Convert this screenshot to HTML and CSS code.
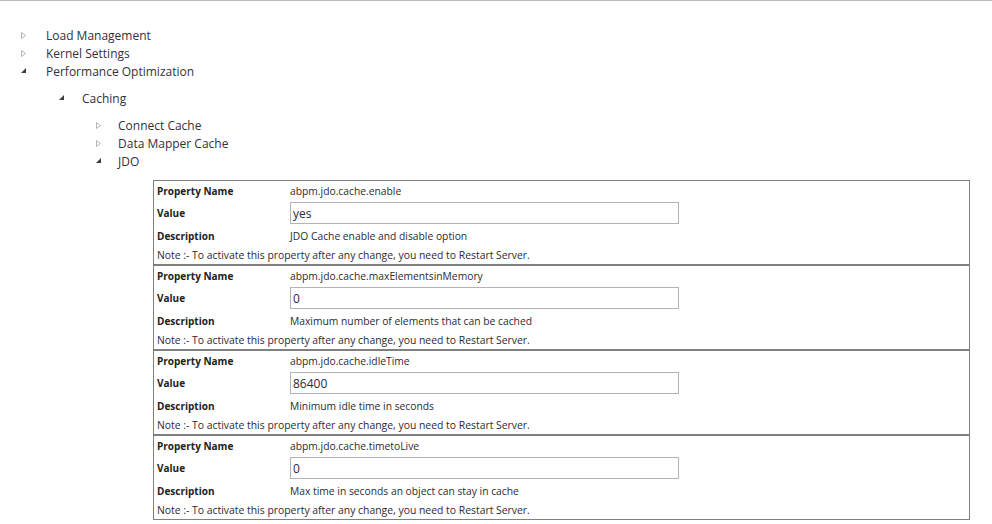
FILE: index.html
```html
<!DOCTYPE html>
<html>
<head>
<meta charset="utf-8">
<link rel="stylesheet" href="styles.css">
</head>
<body>
<div class="frame">
  <ul class="tree lvl1">
    <li><div class="item"><span class="tog"><svg class="ic-c" width="5" height="7" viewBox="0 0 5 7"><path d="M0.5 0.5 L4.5 3.5 L0.5 6.5 Z" fill="none" stroke="#b4b4b4" stroke-width="1"/></svg></span><span class="lbl">Load Management</span></div></li>
    <li><div class="item"><span class="tog"><svg class="ic-c" width="5" height="7" viewBox="0 0 5 7"><path d="M0.5 0.5 L4.5 3.5 L0.5 6.5 Z" fill="none" stroke="#b4b4b4" stroke-width="1"/></svg></span><span class="lbl">Kernel Settings</span></div></li>
    <li><div class="item"><span class="tog"><svg class="ic-e" width="5" height="5" viewBox="0 0 5 5"><path d="M5 0 L5 5 L0 5 Z" fill="#3c3c3c"/></svg></span><span class="lbl">Performance Optimization</span></div>
      <ul class="tree lvl2">
        <li><div class="item"><span class="tog"><svg class="ic-e" width="5" height="5" viewBox="0 0 5 5"><path d="M5 0 L5 5 L0 5 Z" fill="#3c3c3c"/></svg></span><span class="lbl">Caching</span></div>
          <ul class="tree lvl3">
            <li><div class="item"><span class="tog"><svg class="ic-c" width="5" height="7" viewBox="0 0 5 7"><path d="M0.5 0.5 L4.5 3.5 L0.5 6.5 Z" fill="none" stroke="#b4b4b4" stroke-width="1"/></svg></span><span class="lbl">Connect Cache</span></div></li>
            <li><div class="item"><span class="tog"><svg class="ic-c" width="5" height="7" viewBox="0 0 5 7"><path d="M0.5 0.5 L4.5 3.5 L0.5 6.5 Z" fill="none" stroke="#b4b4b4" stroke-width="1"/></svg></span><span class="lbl">Data Mapper Cache</span></div></li>
            <li><div class="item"><span class="tog"><svg class="ic-e" width="5" height="5" viewBox="0 0 5 5"><path d="M5 0 L5 5 L0 5 Z" fill="#3c3c3c"/></svg></span><span class="lbl">JDO</span></div>
              <div class="props">
                <div class="prop">
                  <div class="k r1">Property Name</div><div class="v r1">abpm.jdo.cache.enable</div>
                  <div class="k r2">Value</div><div class="v r2"><input class="inp" type="text" value="yes"></div>
                  <div class="k r3">Description</div><div class="v r3">JDO Cache enable and disable option</div>
                  <div class="note">Note :- To activate this property after any change, you need to Restart Server.</div>
                </div>
                <div class="prop">
                  <div class="k r1">Property Name</div><div class="v r1">abpm.jdo.cache.maxElementsinMemory</div>
                  <div class="k r2">Value</div><div class="v r2"><input class="inp" type="text" value="0"></div>
                  <div class="k r3">Description</div><div class="v r3">Maximum number of elements that can be cached</div>
                  <div class="note">Note :- To activate this property after any change, you need to Restart Server.</div>
                </div>
                <div class="prop">
                  <div class="k r1">Property Name</div><div class="v r1">abpm.jdo.cache.idleTime</div>
                  <div class="k r2">Value</div><div class="v r2"><input class="inp" type="text" value="86400"></div>
                  <div class="k r3">Description</div><div class="v r3">Minimum idle time in seconds</div>
                  <div class="note">Note :- To activate this property after any change, you need to Restart Server.</div>
                </div>
                <div class="prop">
                  <div class="k r1">Property Name</div><div class="v r1">abpm.jdo.cache.timetoLive</div>
                  <div class="k r2">Value</div><div class="v r2"><input class="inp" type="text" value="0"></div>
                  <div class="k r3">Description</div><div class="v r3">Max time in seconds an object can stay in cache</div>
                  <div class="note">Note :- To activate this property after any change, you need to Restart Server.</div>
                </div>
              </div>
            </li>
          </ul>
        </li>
      </ul>
    </li>
  </ul>
</div>
</body>
</html>
```
FILE: styles.css
```css
html, body {
  margin: 0;
  padding: 0;
  background: #ffffff;
}
body {
  font-family: "Open Sans", "Noto Sans", sans-serif;
  color: #2b2b33;
  overflow: hidden;
}
.frame {
  border-top: 1px solid #b9b9b9;
  height: 523px;
  box-sizing: border-box;
}
.tree {
  list-style: none;
  margin: 0;
  padding: 0;
}
.lvl1 {
  margin-top: 25px;
  padding-left: 21px;
}
.lvl2 {
  margin-top: 9px;
  padding-left: 38px;
}
.lvl3 {
  margin-top: 9px;
  padding-left: 37px;
}
.item {
  display: flex;
  align-items: center;
  height: 18px;
  font-size: 12px;
  color: #33303a;
}
.tog {
  display: flex;
  align-items: center;
  width: 25px;
  flex: none;
}
.lvl2 > li > .item > .tog { width: 23px; }
.lvl3 > li > .item > .tog { width: 22px; }
.tog svg { display: block; }
.ic-e { margin-top: -1px; }
.props {
  margin-top: 10px;
  margin-left: 57px;
  width: 817px;
}
.prop {
  display: grid;
  grid-template-columns: 136px 1fr;
  border: 1px solid #808080;
  font-size: 10.3px;
  color: #2b2b33;
}
.k {
  padding-left: 3px;
  font-size: 10px;
  font-weight: bold;
  display: flex;
  align-items: center;
  color: #222;
}
.v {
  display: flex;
  align-items: center;
}
.r1 { height: 19px; }
.r2 { height: 26px; }
.r3 { height: 19px; }
.note {
  grid-column: 1 / 3;
  height: 19px;
  padding-left: 3px;
  font-size: 10.4px;
  display: flex;
  align-items: center;
}
.inp {
  width: 389px;
  height: 22px;
  box-sizing: border-box;
  margin: 0;
  border: 1px solid #b4b4b4;
  padding: 0 0 0 2px;
  font-family: "Open Sans", "Noto Sans", sans-serif;
  font-size: 12px;
  color: #2b2b33;
  outline: none;
  background: #fff;
}
```
